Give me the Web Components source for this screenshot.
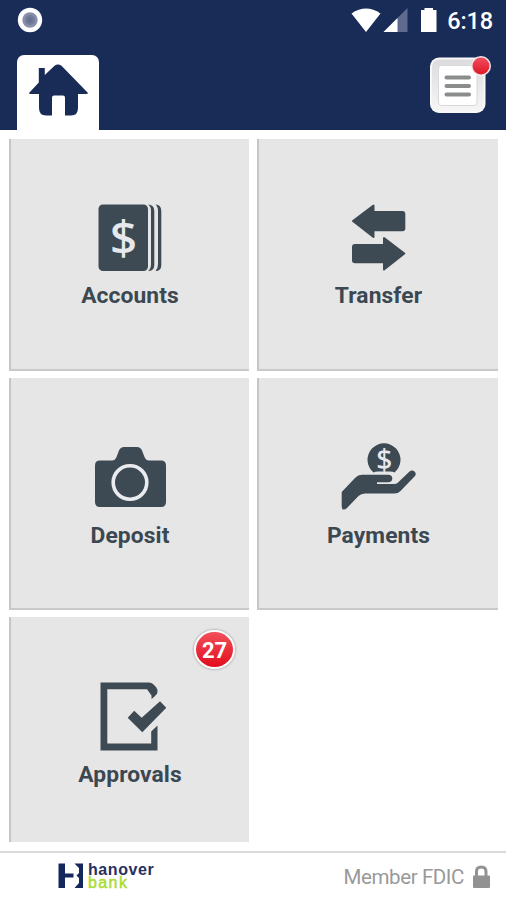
<!DOCTYPE html>
<html lang="en">
<head>
<meta charset="utf-8">
<title>Hanover Bank</title>
<style>
html,body{margin:0;height:100%;background:#fff}
body{font-family:Roboto,"Liberation Sans",sans-serif}
</style>
</head>
<body>
<bank-app></bank-app>
<script>
const define = (name, html) => customElements.define(name, class extends HTMLElement {
  constructor() {
    super();
    this.attachShadow({mode: 'open'}).innerHTML = html;
  }
});

define('status-bar', `<style>
:host{display:flex;height:42px;box-sizing:border-box;padding:0 13px 0 17px;align-items:center;color:#fff}
.gap{flex:1}svg{display:block}
.time{font-size:23.5px;line-height:42px;font-weight:500;width:45px;text-align:right;white-space:nowrap;display:flex;justify-content:flex-end;letter-spacing:-.1px}
</style>
<svg width="26" height="42" viewBox="17 0 26 42"><circle cx="30" cy="20" r="12.2" fill="#fff"/><circle cx="30" cy="20" r="7.7" fill="#888fa9"/><circle cx="30" cy="20" r="5" fill="#727b99"/><circle cx="30" cy="20" r="2.5" fill="#667092"/></svg>
<span class="gap"></span>
<svg width="98" height="42" viewBox="350 0 98 42"><path d="M351.5 13.5Q366 3.500 380.500 13.500L366 32Z" fill="#fff"/><path d="M407.500 8V32H383.500Z" fill="#5e6a8e"/><path d="M397.500 18V32H383.500Z" fill="#fff"/><path d="M421 10h3.500V8h8.500v2h3.500v22H421Z" fill="#fff"/></svg>
<span class="time">6:18</span>`);

define('home-tab', `<style>
:host{display:block;width:82px;height:75px;background:#fff;border-radius:7px 7px 0 0}svg{display:block}
</style>
<svg width="82" height="75" viewBox="17 55 82 75"><path d="M29 93 38.800 82.500V68H44.800V75L54.500 65.800Q58 63 61.500 65.800L88 93Q88 94 86 94H78V108Q78 115.500 71 115.500H65V97.500Q65 95.500 63 95.500H54Q52 95.500 52 97.500V115.500H46Q39 115.500 39 108V94H31Q28.500 94 29 93Z" fill="#192b57"/></svg>`);

define('menu-button', `<style>
:host{display:block;width:64px;height:60px}svg{display:block}
</style>
<svg width="64" height="60" viewBox="428 54 64 60">
<defs><linearGradient id="f" x2="0" y2="1"><stop stop-color="#dcdcde"/><stop offset="1" stop-color="#f6f6f7"/></linearGradient><linearGradient id="r" x2="0" y2="1"><stop stop-color="#f04d5b"/><stop offset="1" stop-color="#df1828"/></linearGradient></defs>
<rect x="430" y="57.500" width="55.500" height="55.500" rx="9" fill="#f8f8f9"/><rect x="432" y="59.500" width="51.500" height="51.500" rx="7" fill="url(#f)"/>
<rect x="438.500" y="65.500" width="38.500" height="40" rx="3" fill="#fff" stroke="#d8d8da"/>
<path d="M446.500 77.500H469M446.500 86H469M446.500 94.500H469" stroke="#8b8d8d" stroke-width="4" stroke-linecap="round"/>
<circle cx="481" cy="66" r="10" fill="#eee8ec"/><circle cx="481" cy="66" r="8.500" fill="url(#r)"/></svg>`);

define('app-header', `<style>
:host{display:block;background:#192b57;height:130px}
.row{display:flex;justify-content:space-between;align-items:flex-end;height:88px;padding:0 14px 0 17px}
menu-button{margin-bottom:16px}
</style><status-bar></status-bar><div class="row"><home-tab></home-tab><menu-button></menu-button></div>`);

define('count-badge', `<style>
:host{position:absolute;right:14px;top:13px;width:37px;height:35px;border:2.5px solid #fafafa;border-radius:50%;background:linear-gradient(#f2505b,#e10d1d);box-shadow:0 0 2px 1px #bbb;color:#fff;font-weight:700;font-size:22px;line-height:37px;text-align:center}
</style><slot></slot>`);

define('menu-tile', `<style>
:host{position:relative;display:flex;flex-direction:column;align-items:center;box-sizing:border-box;background:#e6e6e6;border-left:2px solid #c6c6c6;border-bottom:2px solid #c9c9c9;padding-top:56px;color:#3c4851}
:host([last]){border-bottom:0}
.label{font-weight:700;font-size:22.8px;line-height:26px;margin-top:var(--label-gap,8px);letter-spacing:.1px;white-space:nowrap}
</style><slot name="icon"></slot><div class="label"><slot></slot></div><slot name="badge"></slot>`);

const iconStyle = '<style>:host{display:block;width:120px;height:80px}svg{display:block}</style>';
const icon = (name, x, y, art) => define(name, `${iconStyle}<svg width="120" height="80" viewBox="${x} ${y} 120 80" fill="#3e4a53">${art}</svg>`);

icon('accounts-icon', 70, 195, `<rect x="98.500" y="204.500" width="49.500" height="66.500" rx="4.500"/><path d="M148 204.500Q154.300 204.500 154.300 211V265Q154.300 271 148 271Q151 269 151 264V211Q151 206 148 204.500ZM155.500 204.500Q161.300 204.500 161.300 211V265Q161.300 271 155.500 271Q158 268.500 158 264V211Q158 206.500 155.500 204.500Z"/><text x="123.500" y="255" text-anchor="middle" font-family="Noto Sans" font-size="48" font-weight="500" fill="#e6e8ed">$</text>`);
icon('transfer-icon', 319, 195, `<path stroke="#3e4a53" stroke-width="2" stroke-linejoin="round" d="M353 221 373.500 205.500V212H402.500Q404.300 212 404.300 214V228.500Q404.300 230.300 402.500 230.300H373.500V237ZM404.300 253.500 384 238V245H355Q353 245 353 247V260.500Q353 262.300 355 262.300H384V269.500Z"/>`);
icon('deposit-icon', 70, 434, `<path d="M100 460.500H112Q115 460.500 116.500 457L119 450.500Q120.500 447 124 447H137Q140.500 447 142 450.500L144.500 457Q146 460.500 149 460.500H161Q166 460.500 166 465.500V502Q166 507 161 507H100Q95 507 95 502V465.500Q95 460.500 100 460.500Z"/><circle cx="130" cy="482.500" r="16.800" fill="none" stroke="#e9ebef" stroke-width="3.600"/>`);
icon('payments-icon', 319, 434, `<path d="M373.500 472.500A16.500 16.500 0 1 1 394.500 472.500Q393 471.500 390 471.500H378Q375 471.500 373.500 472.500Z"/><text x="384.200" y="470" text-anchor="middle" font-family="Noto Sans" font-size="28" font-weight="500" fill="#e6e8ed">$</text><path d="M341.700 492 355 478Q358 474.800 362 474.800H388Q392.300 474.800 392.300 478.500Q392.300 482 388 482.200H377V484H394Q396.500 484 398 482.500L409.500 471.500Q412 469.500 414.500 471.500Q417 474 414.500 476.500L400.500 491Q398 493.500 394.500 493.500H365Q361 493.500 358.500 496L347 508Q345 510 342.700 509.500Q341.700 509 341.700 506Z"/>`);
icon('approvals-icon', 70, 673, `<path d="M100.500 682.500H149Q151.500 682.500 153 684L156 687Q158.500 690 157.300 693Q156.500 695 151.500 699V695.500L147 689.300H107.300V743.500H151.200V731.500L157.500 725.500V750.500H100.500Z"/><path d="M127.700 717.700 134.200 710.700 141.700 717.700 160 701.300 166.300 707.700 142.300 732.300Z"/>`);

define('bank-logo', `<style>
:host{display:flex;gap:4px;height:30px;color:#26305e;font-family:"Liberation Sans",sans-serif;font-weight:700}
svg{display:block}.name{display:flex;flex-direction:column;font-size:16px;line-height:13px;letter-spacing:.6px;padding-top:2px}.bank{color:#a9dc35;font-weight:400;-webkit-text-stroke:.5px #a9dc35;letter-spacing:1.4px}
</style><svg width="26" height="30" viewBox="58 861 26 30" fill="#14285c"><path d="M58.500 863.500H65V873.500H73.500V877.500H65V888H58.500ZM74.500 863.500H83V888H74.500L79 883V878L76.500 875.500L79 873V868Z"/></svg>
<div class="name"><span>hanover</span><span class="bank">bank</span></div>`);

define('app-footer', `<style>
:host{display:flex;height:49px;box-sizing:border-box;border-top:2px solid #d9d9d9;background:#fff;padding:8px 15px 0 58px;justify-content:space-between;align-items:flex-start;color:#999}
.member{display:flex;align-items:center;gap:8px;font-size:20.5px;letter-spacing:-.4px;line-height:32px}svg{display:block}
</style><bank-logo></bank-logo><div class="member"><span>Member FDIC</span><svg width="19" height="24" viewBox="0 0 19 24" fill="none"><path d="M4.500 12V6.500Q4.500 2 9.200 2Q14 2 14 6.500V12" stroke="#929292" stroke-width="3"/><rect x="1" y="10.500" width="17" height="12.500" rx="1" fill="#929292"/></svg></div>`);

define('bank-app', `<style>
:host{display:flex;flex-direction:column;height:900px;width:506px;background:#fff;overflow:hidden}
main{flex:1;display:grid;grid-template-columns:240px 241px;grid-template-rows:232px 232px 225px;gap:7px 8px;padding:9px 0 0 9px}
menu-tile:nth-child(n+3){--label-gap:9px}
</style><app-header></app-header><main>
<menu-tile><accounts-icon slot="icon"></accounts-icon>Accounts</menu-tile>
<menu-tile><transfer-icon slot="icon"></transfer-icon>Transfer</menu-tile>
<menu-tile><deposit-icon slot="icon"></deposit-icon>Deposit</menu-tile>
<menu-tile><payments-icon slot="icon"></payments-icon>Payments</menu-tile>
<menu-tile last><approvals-icon slot="icon"></approvals-icon>Approvals<count-badge slot="badge">27</count-badge></menu-tile>
</main><app-footer></app-footer>`);
</script>
</body>
</html>
